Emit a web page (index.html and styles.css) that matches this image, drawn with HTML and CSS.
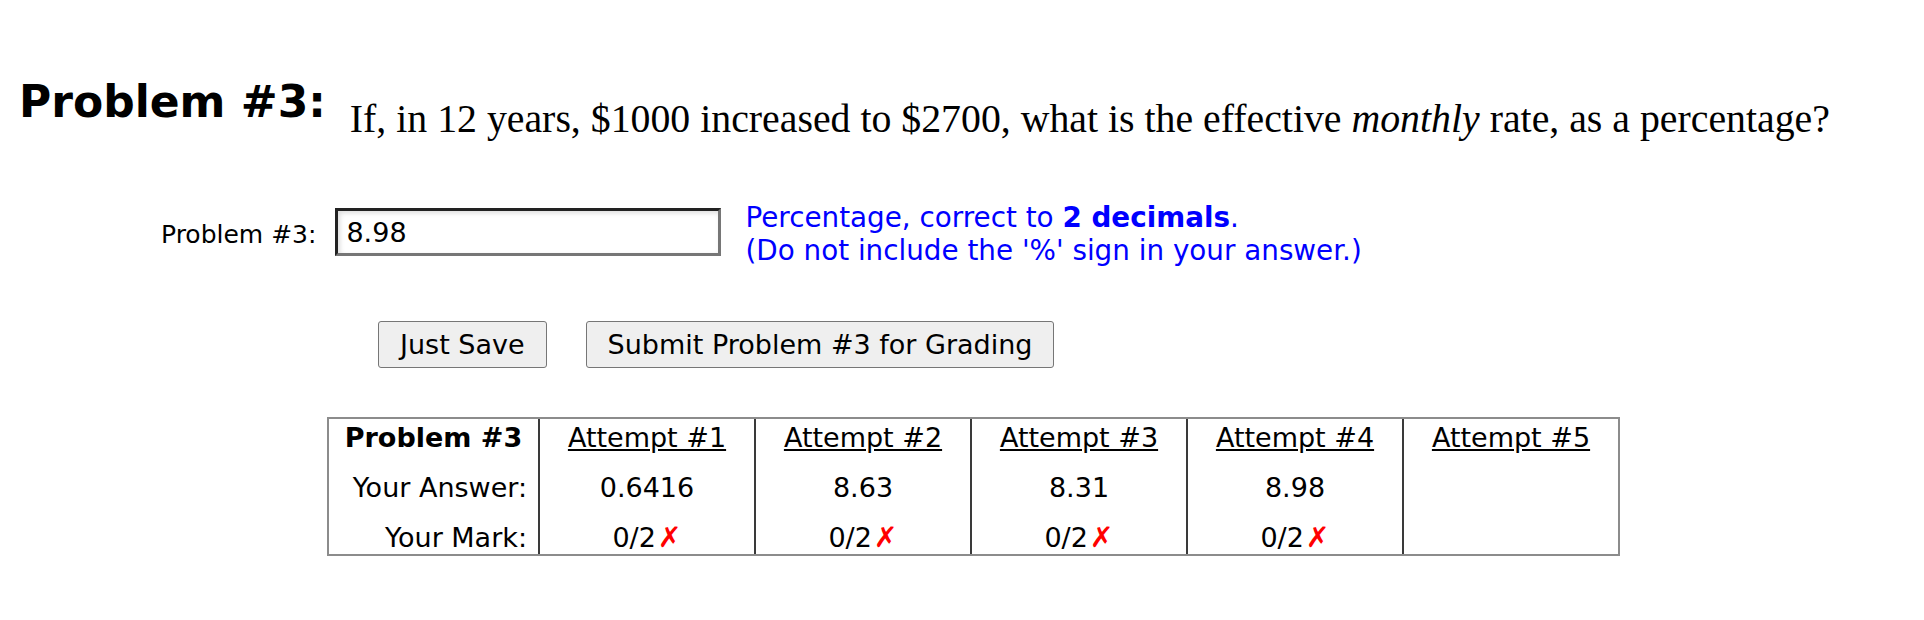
FILE: index.html
```html
<!DOCTYPE html>
<html lang="en">

<head>
  <meta charset="UTF-8" />
  <title>Problem #3</title>
  <link rel="stylesheet" href="styles.css">
</head>

<body>

  <div class="problem-head">
    <h1>Problem #3:</h1>
    <p class="question">If, in 12 years, $1000 increased to $2700, what is the effective <i>monthly</i> rate, as a percentage?</p>
  </div>

  <form class="answer-form" onsubmit="return false;">
    <div class="answer-row">
      <label for="answer3">Problem #3:</label>
      <input type="text" id="answer3" class="answer-input" value="8.98">
      <div class="hint">
        Percentage, correct to <b>2 decimals</b>.<br>
        (Do not include the '%' sign in your answer.)
      </div>
    </div>

    <div class="buttons">
      <button type="button">Just Save</button>
      <button type="submit">Submit Problem #3 for Grading</button>
    </div>
  </form>

  <table class="attempts">
    <colgroup>
      <col class="col-label">
      <col class="col-attempt">
      <col class="col-attempt">
      <col class="col-attempt">
      <col class="col-attempt">
      <col class="col-attempt">
    </colgroup>
    <tr>
      <th class="problem-name">Problem #3</th>
      <th><a href="#">Attempt #1</a></th>
      <th><a href="#">Attempt #2</a></th>
      <th><a href="#">Attempt #3</a></th>
      <th><a href="#">Attempt #4</a></th>
      <th><a href="#">Attempt #5</a></th>
    </tr>
    <tr>
      <td class="row-label">Your Answer:</td>
      <td>0.6416</td>
      <td>8.63</td>
      <td>8.31</td>
      <td>8.98</td>
      <td></td>
    </tr>
    <tr>
      <td class="row-label">Your Mark:</td>
      <td>0/2<span class="wrong">✗</span></td>
      <td>0/2<span class="wrong">✗</span></td>
      <td>0/2<span class="wrong">✗</span></td>
      <td>0/2<span class="wrong">✗</span></td>
      <td></td>
    </tr>
  </table>

</body>
</html>
```

FILE: styles.css
```css
* {
  box-sizing: border-box;
}

body {
  margin: 0;
  background: white;
  color: black;
  font-family: "DejaVu Sans", Verdana, sans-serif;
}

.problem-head {
  display: flex;
  align-items: flex-start;
  padding-left: 19px;
}

.problem-head h1 {
  margin: 76px 0 0;
  font-size: 44px;
  font-weight: bold;
  white-space: nowrap;
}

.question {
  margin: 96px 0 0 24px;
  font-family: "Liberation Serif", "Times New Roman", serif;
  font-size: 39.8px;
  white-space: nowrap;
}

.answer-row {
  display: flex;
  align-items: center;
  margin-top: 59px;
  padding-left: 161px;
}

.answer-row label {
  font-size: 25px;
  margin-right: 19px;
}

.answer-input {
  width: 386px;
  height: 48px;
  margin: 0 24px 4px 0;
  padding: 0 8px;
  border: 3px solid;
  border-color: #222 #767676 #767676 #222;
  box-shadow: inset 2px 2px 5px rgba(0, 0, 0, 0.14);
  font-family: "DejaVu Sans", Verdana, sans-serif;
  font-size: 27px;
  color: black;
  background: white;
}

.hint {
  color: blue;
  font-size: 27.8px;
  line-height: 33px;
}

.buttons {
  display: flex;
  gap: 39px;
  margin-top: 54px;
  padding-left: 378px;
}

.buttons button {
  padding: 6px 21px;
  background: #efefef;
  border: 1px solid #767676;
  border-radius: 3px;
  font-family: "DejaVu Sans", Verdana, sans-serif;
  font-size: 27px;
  line-height: 33px;
  color: black;
  cursor: pointer;
}

.attempts {
  margin: 49px 0 0 327px;
  width: 1293px;
  table-layout: fixed;
  border-collapse: separate;
  border-spacing: 0;
  border: 2px solid #8c8c8c;
  font-size: 27px;
}

.col-label {
  width: 209px;
}

.col-attempt {
  width: 216px;
}

.attempts th,
.attempts td {
  padding: 17px 11px 0;
  line-height: 33px;
  text-align: center;
  font-weight: normal;
  white-space: nowrap;
}

.attempts tr:first-child th {
  padding-top: 2px;
}

.attempts th + th,
.attempts td + td {
  border-left: 2px solid #3a3a3a;
}

.attempts th.problem-name {
  font-weight: bold;
}

.attempts td.row-label {
  text-align: right;
}

.attempts a {
  color: black;
}

.wrong {
  margin-left: 2px;
  color: red;
  font-weight: bold;
  font-size: 1.05em;
  line-height: 1;
}
```
